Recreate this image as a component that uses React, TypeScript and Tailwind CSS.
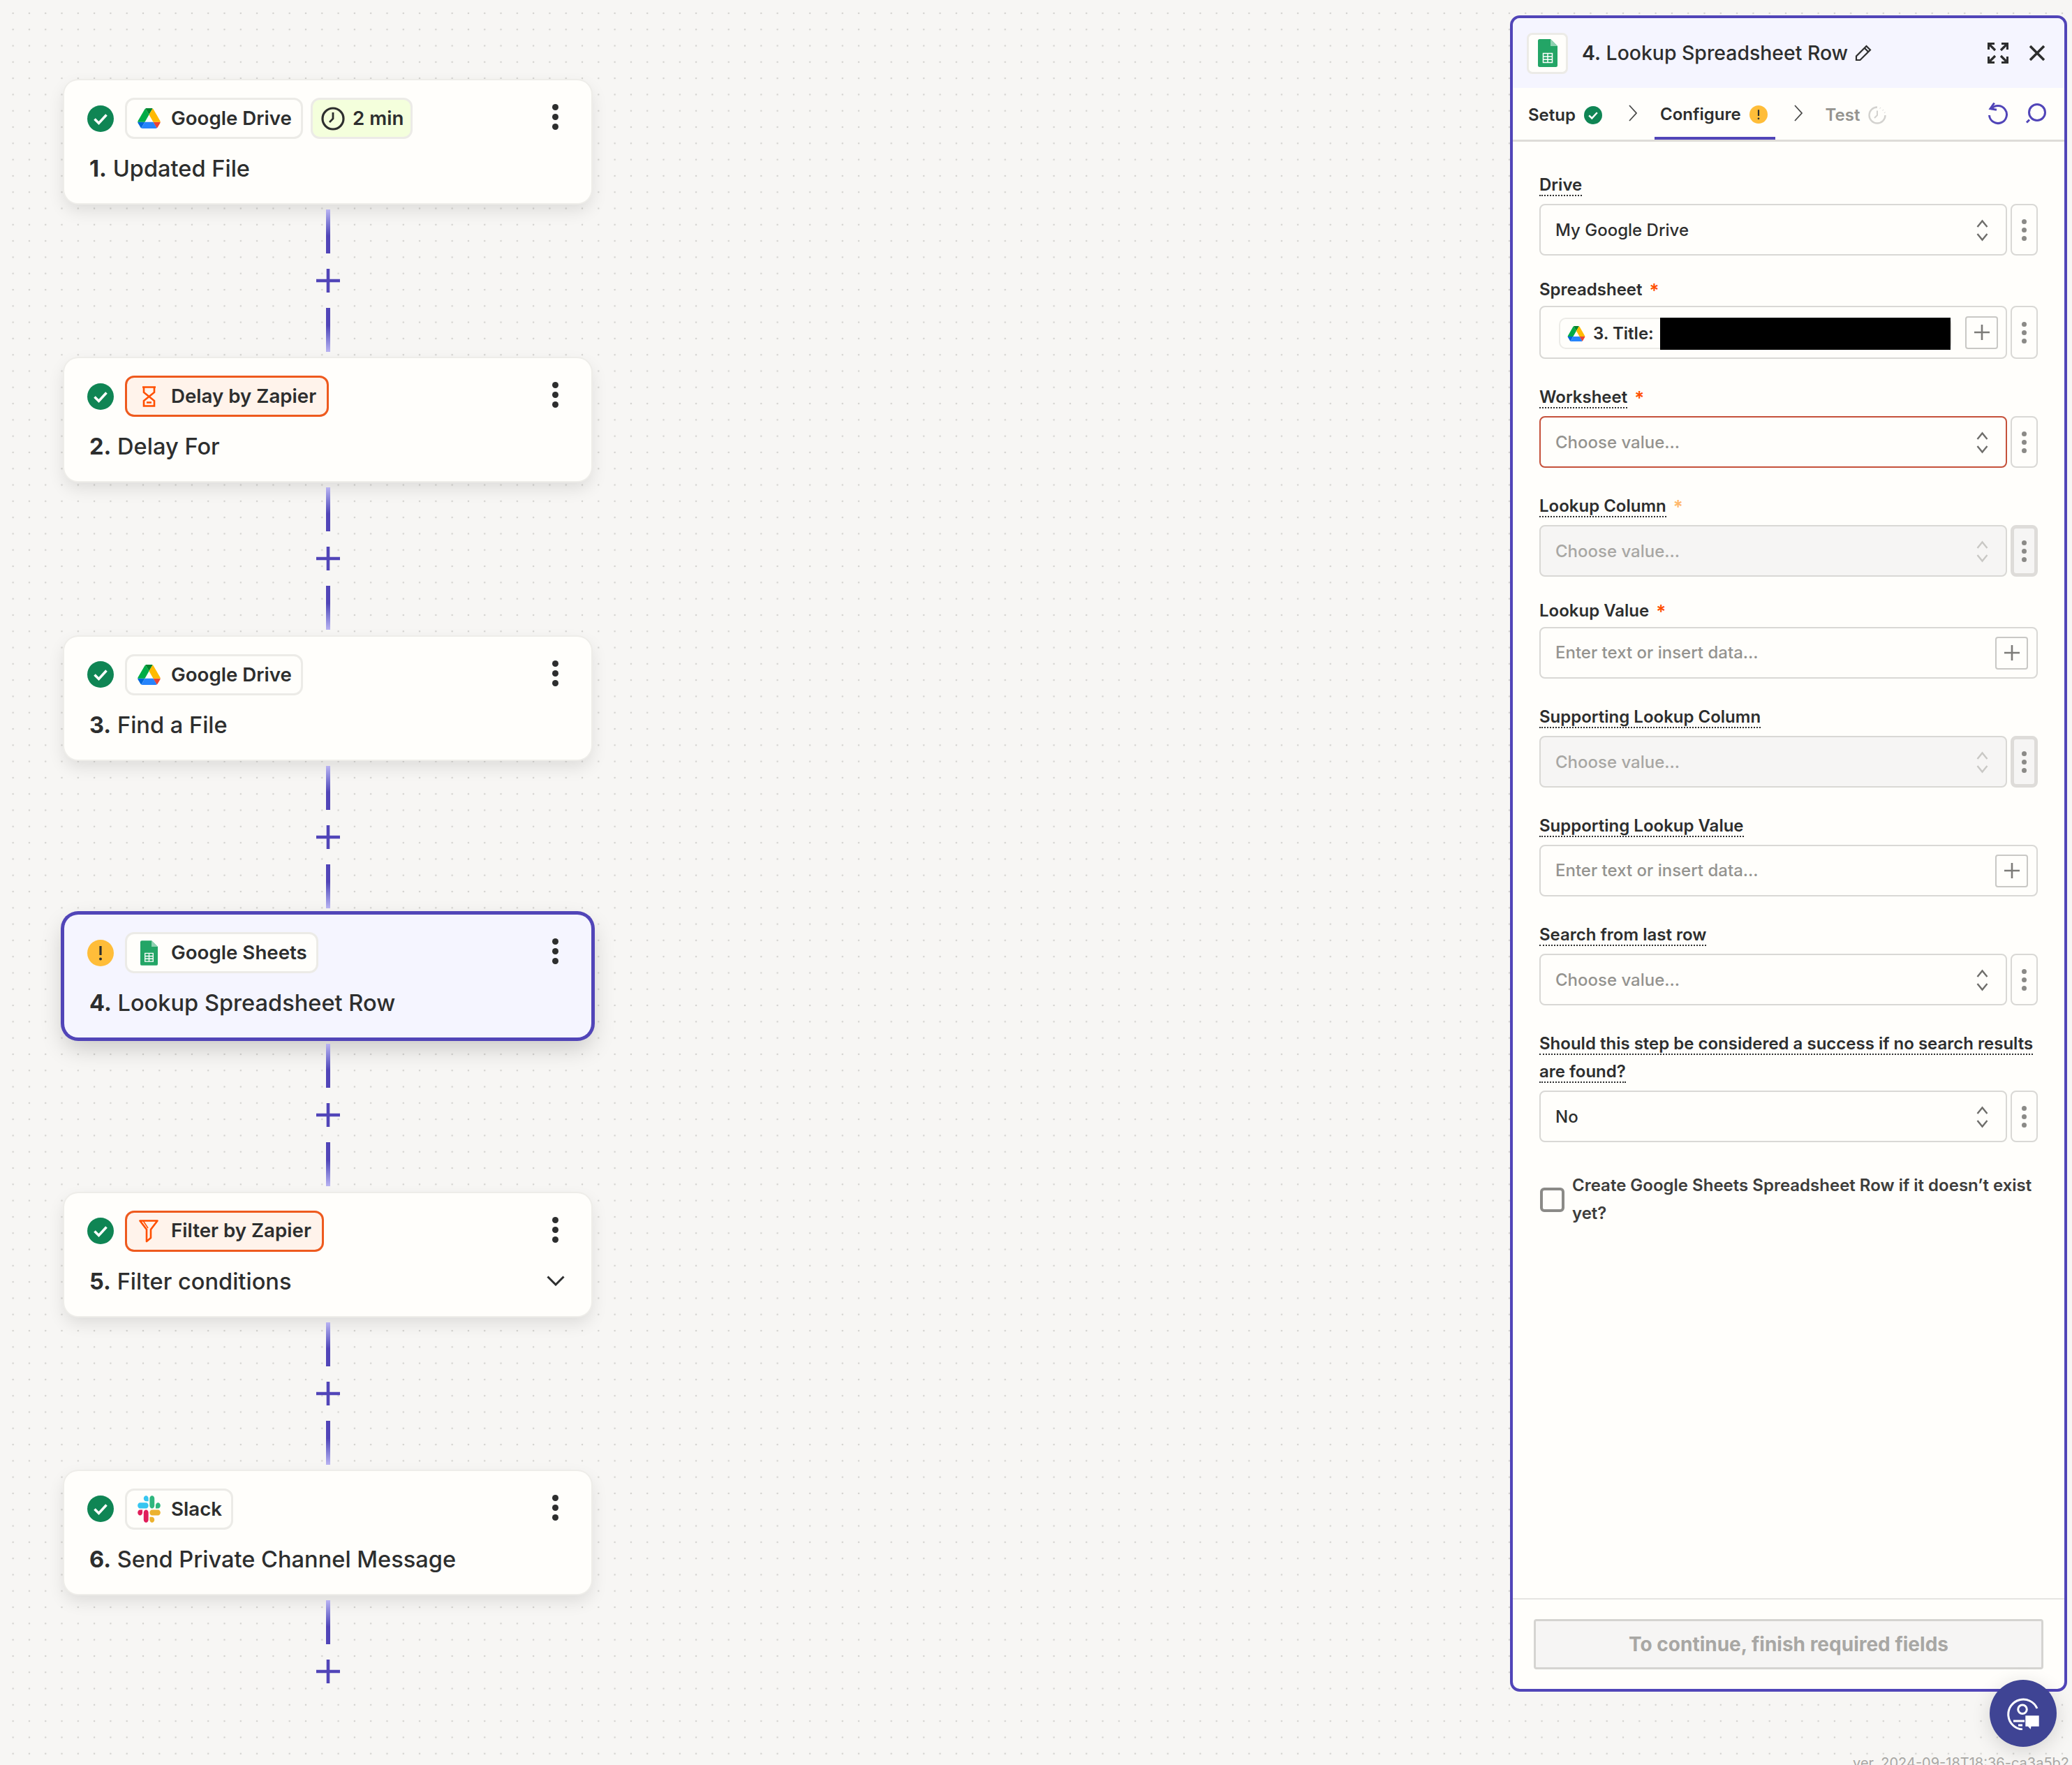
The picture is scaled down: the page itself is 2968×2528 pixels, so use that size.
import { ReactNode } from "react";

const DriveIcon = ({ className }: { className: string }) => (
  <svg viewBox="0 0 87.3 78" className={className}>
    <path d="m6.6 66.85 3.85 6.65c.8 1.4 1.95 2.5 3.3 3.3l13.75-23.8h-27.5c0 1.55.4 3.1 1.2 4.5z" fill="#0066da" />
    <path d="m43.65 25-13.75-23.8c-1.35.8-2.5 1.9-3.3 3.3l-25.4 44a9.06 9.06 0 0 0 -1.2 4.5h27.5z" fill="#00ac47" />
    <path d="m73.55 76.8c1.35-.8 2.5-1.9 3.3-3.3l1.6-2.75 7.65-13.25c.8-1.4 1.2-2.95 1.2-4.5h-27.502l5.852 11.5z" fill="#ea4335" />
    <path d="m43.65 25 13.75-23.8c-1.35-.8-2.9-1.2-4.5-1.2h-18.5c-1.6 0-3.15.45-4.5 1.2z" fill="#00832d" />
    <path d="m59.8 53h-32.3l-13.75 23.8c1.35.8 2.9 1.2 4.5 1.2h50.8c1.6 0 3.15-.45 4.5-1.2z" fill="#2684fc" />
    <path d="m73.4 26.5-12.7-22c-.8-1.4-1.95-2.5-3.3-3.3l-13.75 23.8 16.15 28h27.45c0-1.55-.4-3.1-1.2-4.5z" fill="#ffba00" />
  </svg>
);

const SheetsIcon = ({ className }: { className: string }) => (
  <svg viewBox="0 0 28 40" className={className}>
    <path d="M2.5 0H18L28 10V37.5A2.5 2.5 0 0 1 25.5 40H2.5A2.5 2.5 0 0 1 0 37.5V2.5A2.5 2.5 0 0 1 2.5 0Z" fill="#23a566" />
    <path d="M18 0L28 10H18Z" fill="#8ed1b1" />
    <path d="M7.5 20.5H20.5V33.5H7.5ZM7.5 25H20.5M7.5 29.2H20.5M14 20.5V33.5" fill="none" stroke="#fff" strokeWidth="1.5" />
  </svg>
);

const SlackIcon = () => (
  <svg viewBox="0 0 127 127" className="h-[39px] w-[33px]" preserveAspectRatio="none">
    <path d="M27.2 80c0 7.3-5.9 13.2-13.2 13.2C6.7 93.2.8 87.3.8 80c0-7.3 5.9-13.2 13.2-13.2h13.2V80zm6.6 0c0-7.3 5.9-13.2 13.2-13.2 7.3 0 13.2 5.9 13.2 13.2v33c0 7.3-5.9 13.2-13.2 13.2-7.3 0-13.2-5.9-13.2-13.2V80z" fill="#E01E5A" />
    <path d="M47 27c-7.3 0-13.2-5.9-13.2-13.2C33.8 6.5 39.7.6 47 .6c7.3 0 13.2 5.9 13.2 13.2V27H47zm0 6.7c7.3 0 13.2 5.9 13.2 13.2 0 7.3-5.9 13.2-13.2 13.2H13.9C6.6 60.1.7 54.2.7 46.9c0-7.3 5.9-13.2 13.2-13.2H47z" fill="#36C5F0" />
    <path d="M99.9 46.9c0-7.3 5.9-13.2 13.2-13.2 7.3 0 13.2 5.9 13.2 13.2 0 7.3-5.9 13.2-13.2 13.2H99.9V46.9zm-6.6 0c0 7.3-5.9 13.2-13.2 13.2-7.3 0-13.2-5.9-13.2-13.2V13.8C66.9 6.5 72.8.6 80.1.6c7.3 0 13.2 5.9 13.2 13.2v33.1z" fill="#2EB67D" />
    <path d="M80.1 99.8c7.3 0 13.2 5.9 13.2 13.2 0 7.3-5.9 13.2-13.2 13.2-7.3 0-13.2-5.9-13.2-13.2V99.8h13.2zm0-6.6c-7.3 0-13.2-5.9-13.2-13.2 0-7.3 5.9-13.2 13.2-13.2h33.1c7.3 0 13.2 5.9 13.2 13.2 0 7.3-5.9 13.2-13.2 13.2H80.1z" fill="#ECB22E" />
  </svg>
);

const HourglassIcon = () => (
  <svg viewBox="0 0 21 30" className="h-[30px] w-[21px]" fill="none" stroke="#ff4f00" strokeWidth="2.6">
    <path d="M1 1.5H20M3 1.5V9L10.5 15L3 21V28.5H18V21L10.5 15L18 9V1.5" />
    <path d="M7 23.5H14" />
  </svg>
);

const FunnelIcon = () => (
  <svg viewBox="0 0 28 33" className="h-[33px] w-[28px]" fill="none" stroke="#ff4f00" strokeWidth="2.6" strokeLinejoin="round">
    <path d="M1.5 1.5H26.5L17 14V26L11 31V14Z" />
    <path d="M6 1.5L13 12" strokeWidth="1.5" />
  </svg>
);

const CheckBadge = ({ className }: { className: string }) => (
  <svg viewBox="0 0 38 38" className={className}>
    <circle cx="19" cy="19" r="19" fill="#0f8554" />
    <path d="M10.5 19.5L16.5 25.5L27.5 13.5" fill="none" stroke="#fff" strokeWidth="3.6" />
  </svg>
);

const WarnBadge = ({ className }: { className: string }) => (
  <svg viewBox="0 0 38 38" className={className}>
    <circle cx="19" cy="19" r="19" fill="#ffbd39" />
    <path d="M19 9V22" stroke="#2d2e2e" strokeWidth="3.2" />
    <circle cx="19" cy="27.5" r="2" fill="#2d2e2e" />
  </svg>
);

const Kebab = ({ dot = "bg-[#2d2e2e]", size = "h-[9px] w-[9px]", gap = "gap-[5px]" }) => (
  <div className={`flex flex-col ${gap}`}>
    <span className={`${size} rounded-full ${dot}`} />
    <span className={`${size} rounded-full ${dot}`} />
    <span className={`${size} rounded-full ${dot}`} />
  </div>
);

const Connector = ({ last = false }: { last?: boolean }) => (
  <div className={`flex flex-col items-center pt-[9px] ${last ? "" : "h-[222.4px]"}`}>
    <div className="h-[63px] w-[6px] bg-linear-to-b from-[#b9b3f2] to-[#5145b8] to-60%" />
    <svg viewBox="0 0 34 34" className="mt-[22px] h-[34px] w-[34px]" stroke="#5145b8" strokeWidth="4.6">
      <path d="M17 0V34M0 17H34" />
    </svg>
    {!last && <div className="mt-[22px] h-[63px] w-[6px] bg-linear-to-b from-[#5145b8] to-[#b9b3f2] from-40%" />}
  </div>
);

interface ChipProps {
  icon: ReactNode;
  label: string;
  tone?: "plain" | "orange";
}

const Chip = ({ icon, label, tone = "plain" }: ChipProps) => (
  <div
    className={`flex h-[59px] items-center rounded-[13px] border-[3px] pl-[14px] ${
      tone === "orange" ? "border-[#ee5a1e] bg-[#fff3eb] pr-[15px]" : "border-[#ecebe7] bg-[#fffefb] pr-[13px]"
    }`}
  >
    <span className="flex w-[34px] justify-center">{icon}</span>
    <span className="ml-[15px] text-[27.7px] font-semibold text-[#2d2e2e]">{label}</span>
  </div>
);

interface StepProps {
  number: number;
  title: string;
  chip: ReactNode;
  warn?: boolean;
  selected?: boolean;
  expand?: boolean;
}

const StepCard = ({ number, title, chip, warn, selected, expand }: StepProps) => (
  <div
    className={`flex h-[176px] w-[755px] flex-col rounded-[20px] ${
      selected
        ? "bg-[#f5f5ff] shadow-[0_0_0_5px_#5145b8,0_14px_34px_rgba(0,0,0,0.2)]"
        : "bg-[#fffefb] shadow-[0_0_0_2px_#eeede9,0_10px_24px_rgba(0,0,0,0.11)]"
    }`}
  >
    <div className="mt-[25px] flex items-center pl-[33px] pr-[47px]">
      {warn ? <WarnBadge className="h-[38px] w-[38px]" /> : <CheckBadge className="h-[38px] w-[38px]" />}
      <div className="ml-[16px] flex items-center gap-[11px]">{chip}</div>
      <div className="ml-auto -mt-[4px]">
        <Kebab />
      </div>
    </div>
    <div className="mt-[20px] flex items-center justify-between pl-[36px] pr-[38px]">
      <p className="text-[32.6px] leading-[44px] font-medium text-[#2d2e2e]">
        <span className="font-bold">{number}.</span> {title}
      </p>
      {expand && (
        <svg viewBox="0 0 26 15" className="h-[15px] w-[26px]" fill="none" stroke="#2d2e2e" strokeWidth="3">
          <path d="M1.5 1.5L13 13L24.5 1.5" />
        </svg>
      )}
    </div>
  </div>
);

const UpDown = ({ muted = false }: { muted?: boolean }) => (
  <svg viewBox="0 0 17 32" className="h-[32px] w-[17px]" fill="none" stroke={muted ? "#c9c8c5" : "#6f6e6b"} strokeWidth="2.4">
    <path d="M1.5 11L8.5 2.5L15.5 11M1.5 21L8.5 29.5L15.5 21" />
  </svg>
);

const KebabBox = ({ disabled = false }: { disabled?: boolean }) => (
  <div
    className={`flex h-full w-[39px] items-center justify-center rounded-[8px] ${
      disabled ? "border-[5px] border-[#dedcd9] bg-[#f6f5f4]" : "border-[2px] border-[#d9d8d5] bg-[#fffefb]"
    }`}
  >
    <Kebab dot="bg-[#8b8a87]" size="h-[7px] w-[7px]" gap="gap-[5px]" />
  </div>
);

const PlusBox = ({ className = "" }: { className?: string }) => (
  <div className={`flex h-[47px] w-[47px] shrink-0 items-center justify-center rounded-[4px] border-[2px] border-[#c9c8c5] ${className}`}>
    <svg viewBox="0 0 22 22" className="h-[22px] w-[22px]" stroke="#7c7b78" strokeWidth="2.6">
      <path d="M11 0V22M0 11H22" />
    </svg>
  </div>
);

interface FieldProps {
  label: string;
  underlined?: boolean;
  required?: "strong" | "soft";
  children: ReactNode;
  className?: string;
}

const Field = ({ label, underlined, required, children, className = "mt-[28px]" }: FieldProps) => (
  <div className={className}>
    <div className={underlined ? "pt-[7px] pb-[7px]" : "pt-[1px] pb-[3px]"}>
      <p className="text-[24px] leading-[40px] font-semibold text-[#2d2e2e]">
        <span className={underlined ? "border-b-[2px] border-dotted border-[#2d2e2e]" : ""}>{label}</span>
        {required && (
          <span className={`ml-[10px] align-[-2px] text-[26px] leading-none ${required === "soft" ? "text-[#ffb86b]" : "text-[#ff4f00]"}`}>*</span>
        )}
      </p>
    </div>
    {children}
  </div>
);

const SelectRow = ({ value, placeholder, disabled, error }: { value?: string; placeholder?: string; disabled?: boolean; error?: boolean }) => (
  <div className="flex h-[74px] gap-[5px]">
    <div
      className={`flex flex-1 items-center justify-between rounded-[8px] border-[2px] pl-[21px] pr-[25px] pt-[1px] ${
        error ? "border-[#c5513a]" : "border-[#d9d8d5]"
      } ${disabled ? "bg-[#f6f5f4]" : "bg-[#fffefb]"}`}
    >
      <span className={`text-[24px] font-medium ${value ? "text-[#2d2e2e]" : disabled ? "text-[#a8a7a4]" : "text-[#94938f]"}`}>{value ?? placeholder}</span>
      <UpDown muted={disabled} />
    </div>
    <KebabBox disabled={disabled} />
  </div>
);

const TextRow = () => (
  <div className="flex h-[74px] items-center justify-between rounded-[8px] border-[2px] border-[#d9d8d5] bg-[#fffefb] pl-[21px] pr-[12px]">
    <span className="text-[24px] font-medium text-[#94938f]">Enter text or insert data...</span>
    <PlusBox />
  </div>
);

const ClockBadge = () => (
  <svg viewBox="0 0 26 26" className="h-[26px] w-[26px]" fill="none" stroke="#d3d2cf" strokeWidth="2.4">
    <path d="M13 1.5A11.5 11.5 0 1 0 24.5 13" />
    <path d="M17 2.5L17.5 3M21 5.5L21.5 6M23.5 9L24 9.5" />
    <path d="M13 6.5V13L9 17" strokeWidth="2" />
  </svg>
);

export default function App() {
  return (
    <div className="relative flex h-[2528px] w-[2968px] justify-between overflow-hidden bg-[#f7f6f4] bg-[radial-gradient(circle,#d2d1ce_1px,transparent_1.6px)] bg-[size:23.3px_23.3px] bg-[position:7px_7.3px] font-['Inter',sans-serif]">
      <main className="pl-[92px] pt-[115px]">
        <StepCard
          number={1}
          title="Updated File"
          chip={
            <>
              <Chip icon={<DriveIcon className="h-[29px] w-[33px]" />} label="Google Drive" />
              <div className="flex h-[59px] items-center rounded-[13px] border-[3px] border-[#ecebe7] bg-[#f4ffdc] pl-[12px] pr-[10px]">
                <svg viewBox="0 0 34 34" className="h-[34px] w-[34px]" fill="none" stroke="#2d2e2e" strokeWidth="3.2">
                  <circle cx="17" cy="17" r="15" />
                  <path d="M17 8V17L12 22" strokeWidth="2.8" />
                </svg>
                <span className="ml-[11px] text-[27.7px] font-semibold text-[#2d2e2e]">2 min</span>
              </div>
            </>
          }
        />
        <Connector />
        <StepCard number={2} title="Delay For" chip={<Chip tone="orange" icon={<HourglassIcon />} label="Delay by Zapier" />} />
        <Connector />
        <StepCard number={3} title="Find a File" chip={<Chip icon={<DriveIcon className="h-[29px] w-[33px]" />} label="Google Drive" />} />
        <Connector />
        <StepCard number={4} title="Lookup Spreadsheet Row" warn selected chip={<Chip icon={<SheetsIcon className="h-[36px] w-[25px]" />} label="Google Sheets" />} />
        <Connector />
        <StepCard number={5} title="Filter conditions" expand chip={<Chip tone="orange" icon={<FunnelIcon />} label="Filter by Zapier" />} />
        <Connector />
        <StepCard number={6} title="Send Private Channel Message" chip={<Chip icon={<SlackIcon />} label="Slack" />} />
        <Connector last />
      </main>

      <aside className="mr-[7px] mt-[22px] flex h-[2401px] w-[798px] flex-col overflow-hidden rounded-[14px] border-[4px] border-[#5145b8] bg-[#fffefb]">
        <header className="flex h-[100px] shrink-0 items-center bg-[#f5f5ff] pl-[20px] pr-[28px]">
          <div className="flex h-[59px] w-[59px] items-center justify-center rounded-[8px] border-[3px] border-[#ecebe7] bg-[#fffefb]">
            <SheetsIcon className="h-[40px] w-[28px]" />
          </div>
          <h1 className="ml-[20px] text-[28.4px] font-medium text-[#2d2e2e]">
            <span className="font-semibold">4.</span> Lookup Spreadsheet Row
          </h1>
          <svg viewBox="0 0 24 24" className="ml-[10px] h-[24px] w-[24px]" fill="none" stroke="#2d2e2e" strokeWidth="2.2">
            <path d="M2 22V16.5L16.5 2L22 7.5L7.5 22Z" />
            <path d="M14 5L19 10" />
          </svg>
          <svg viewBox="0 0 30 30" className="ml-auto h-[30px] w-[30px]" fill="none" stroke="#2d2e2e" strokeWidth="3.2">
            <path d="M1.5 10V1.5H10M1.5 1.5L11 11M20 1.5H28.5V10M28.5 1.5L19 11M1.5 20V28.5H10M1.5 28.5L11 19M28.5 20V28.5H20M28.5 28.5L19 19" />
          </svg>
          <svg viewBox="0 0 22 22" className="ml-[30px] h-[22px] w-[22px]" fill="none" stroke="#2d2e2e" strokeWidth="3.6">
            <path d="M1 1L21 21M21 1L1 21" />
          </svg>
        </header>

        <nav className="flex h-[77px] shrink-0 items-stretch border-b-[3px] border-[#dedcd8] pl-[22px] pr-[26px]">
          <div className="flex items-center pt-[3px] text-[24px] font-semibold text-[#2d2e2e]">
            Setup
            <CheckBadge className="ml-[12px] h-[26px] w-[26px]" />
          </div>
          <svg viewBox="0 0 12 24" className="ml-[38px] mb-[2px] h-[24px] w-[12px] self-center" fill="none" stroke="#4a4a48" strokeWidth="1.8">
            <path d="M1 1L11 12L1 23" />
          </svg>
          <div className="ml-[25px] flex items-center border-b-[4px] border-[#5145b8] pl-[8px] pr-[11px] pt-[6px] text-[24px] font-semibold text-[#2d2e2e]">
            Configure
            <WarnBadge className="ml-[12px] h-[26px] w-[26px]" />
          </div>
          <svg viewBox="0 0 12 24" className="ml-[27px] mb-[2px] h-[24px] w-[12px] self-center" fill="none" stroke="#4a4a48" strokeWidth="1.8">
            <path d="M1 1L11 12L1 23" />
          </svg>
          <div className="ml-[33px] flex items-center pt-[3px] text-[24px] font-semibold text-[#94938f]">
            Test
            <span className="ml-[12px]">
              <ClockBadge />
            </span>
          </div>
          <div className="ml-auto flex items-center gap-[24px]">
            <svg viewBox="0 0 30 32" className="h-[32px] w-[30px]" fill="none" stroke="#5145b8" strokeWidth="3">
              <path d="M9.7 0.5L4 8.7L13 10.3" />
              <path d="M5 9.5A12.5 12.5 0 1 1 2.5 18" />
            </svg>
            <svg viewBox="0 0 30 30" className="h-[30px] w-[30px]" fill="none" stroke="#5145b8" strokeWidth="3">
              <circle cx="17" cy="13" r="11.5" />
              <path d="M6 23.5L2 27.5" />
            </svg>
          </div>
        </nav>

        <section className="flex-1 px-[38px] pt-[35px]">
          <Field className="" label="Drive" underlined>
            <SelectRow value="My Google Drive" />
          </Field>
          <Field className="mt-[28px]" label="Spreadsheet" required="strong">
            <div className="flex h-[76px] gap-[5px]">
              <div className="flex flex-1 items-center rounded-[8px] border-[2px] border-[#d9d8d5] bg-[#fffefb] pl-[26px] pr-[11px]">
                <div className="mt-[3px] flex h-[45px] min-w-0 flex-1 items-center rounded-[10px] border-[2px] border-[#ecebe7] pl-[10px]">
                  <DriveIcon className="h-[22px] w-[26px] shrink-0" />
                  <span className="ml-[11px] shrink-0 text-[24px] font-semibold text-[#2d2e2e]">3. Title:</span>
                  <div className="ml-[9px] h-[46px] flex-1 shrink-0 bg-black" />
                </div>
                <PlusBox className="ml-[19px]" />
              </div>
              <KebabBox />
            </div>
          </Field>
          <Field label="Worksheet" underlined required="strong">
            <SelectRow placeholder="Choose value..." error />
          </Field>
          <Field label="Lookup Column" underlined required="soft">
            <SelectRow placeholder="Choose value..." disabled />
          </Field>
          <Field label="Lookup Value" required="strong">
            <TextRow />
          </Field>
          <Field label="Supporting Lookup Column" underlined>
            <SelectRow placeholder="Choose value..." disabled />
          </Field>
          <Field label="Supporting Lookup Value" underlined>
            <TextRow />
          </Field>
          <Field label="Search from last row" underlined>
            <SelectRow placeholder="Choose value..." />
          </Field>
          <Field label="Should this step be considered a success if no search results are found?" underlined>
            <SelectRow value="No" />
          </Field>
          <label className="ml-[1px] mt-[42px] flex items-center gap-[11px]">
            <span className="h-[35px] w-[35px] shrink-0 rounded-[6px] border-[4px] border-[#8b8a87] bg-[#fffefb]" />
            <span className="text-[24px] leading-[40px] font-semibold text-[#3d3d3b]">Create Google Sheets Spreadsheet Row if it doesn’t exist yet?</span>
          </label>
        </section>

        <footer className="flex h-[130px] shrink-0 items-start border-t-[2px] border-[#e6e5e2] pl-[30px] pr-[30px] pt-[28px]">
          <button className="h-[72px] w-full rounded-[4px] border-[3px] border-[#d5d4d1] bg-[#f6f5f4] text-[28px] font-bold text-[#a8a7a4]">
            To continue, finish required fields
          </button>
        </footer>
      </aside>

      <div className="absolute left-[2850px] top-[2406px] flex h-[96px] w-[96px] items-center justify-center rounded-full bg-[#3f4494] shadow-[0_6px_28px_rgba(0,0,0,0.14)]">
        <svg viewBox="0 0 48 48" className="h-[48px] w-[48px]" fill="none" stroke="#fff" strokeWidth="3">
          <path d="M44 17A21.5 21.5 0 1 0 23 47" />
          <circle cx="23" cy="18.3" r="6.3" />
          <path d="M10 35H26M17 41H23" />
          <path d="M27.3 27.3H46.7V42.7H35.5L34.7 46.7L31 42.7H27.3Z" fill="#fff" stroke="none" />
        </svg>
      </div>
      <span className="absolute bottom-[-9px] right-[4px] text-[20px] leading-[24px] text-[#a8a7a4]">ver. 2024-09-18T18:36-ca3a5b2</span>
    </div>
  );
}
